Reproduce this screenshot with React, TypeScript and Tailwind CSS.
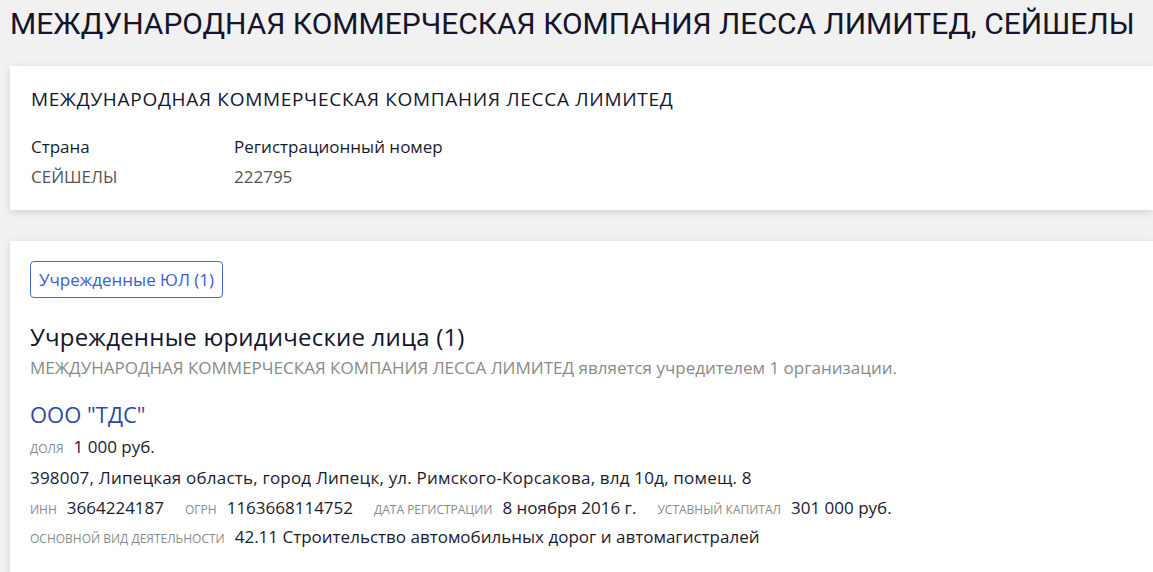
const titleFont = { fontFamily: "Roboto, 'Noto Sans', sans-serif" };
const bodyFont = { fontFamily: "'Open Sans', 'Noto Sans', sans-serif" };

function Label({ children }: { children: React.ReactNode }) {
  return (
    <span className="mr-[10px] text-[12px] uppercase leading-[16px] text-[#8a8a8a]">{children}</span>
  );
}

export default function App() {
  return (
    <div style={bodyFont} className="min-h-[572px] overflow-hidden bg-[#f1f1f1] text-[#1b1b2f]">
      <h1 style={titleFont} className="px-[10px] pt-[4px] text-[30px] leading-[40px] text-[#14152b]">
        МЕЖДУНАРОДНАЯ КОММЕРЧЕСКАЯ КОМПАНИЯ ЛЕССА ЛИМИТЕД, СЕЙШЕЛЫ
      </h1>

      <div className="ml-[10px] mt-[22px] bg-white px-[21px] pb-[18px] pt-[20px] shadow-[0_2px_8px_rgba(0,0,0,0.12)]">
        <h2 className="text-[19px] leading-[26px] tracking-[0.7px] text-[#14152b]">
          МЕЖДУНАРОДНАЯ КОММЕРЧЕСКАЯ КОМПАНИЯ ЛЕССА ЛИМИТЕД
        </h2>
        <div className="mt-[20px] flex text-[17px] leading-[30px]">
          <div className="w-[203px]">
            <div>Страна</div>
            <div className="text-[#555]">СЕЙШЕЛЫ</div>
          </div>
          <div>
            <div>Регистрационный номер</div>
            <div className="text-[#555]">222795</div>
          </div>
        </div>
      </div>

      <div className="ml-[10px] mt-[31px] bg-white px-[20px] pb-[40px] pt-[20px] shadow-[0_2px_8px_rgba(0,0,0,0.12)]">
        <button className="rounded-[4px] border border-[#4a68d4] px-[8px] py-[6px] text-[17px] leading-[23px] text-[#3c5cd0]">
          Учрежденные ЮЛ (1)
        </button>

        <h3 className="mt-[21px] text-[24px] leading-[36px] tracking-[0.2px] text-[#14152b]">
          Учрежденные юридические лица (1)
        </h3>
        <p className="mt-[1px] text-[17px] leading-[24px] text-[#8a8a8a]">
          МЕЖДУНАРОДНАЯ КОММЕРЧЕСКАЯ КОМПАНИЯ ЛЕССА ЛИМИТЕД является учредителем 1 организации.
        </p>

        <div className="mt-[16px] text-[17px] leading-[30px] text-[#1b1b2f]">
          <a className="block text-[22px] leading-[36px] text-[#2c4a9f]">ООО "ТДС"</a>
          <div className="flex items-baseline">
            <Label>доля</Label>
            <span>1 000 руб.</span>
          </div>
          <div className="leading-[31px] tracking-[0.2px]">
            398007, Липецкая область, город Липецк, ул. Римского-Корсакова, влд 10д, помещ. 8
          </div>
          <div className="flex items-baseline">
            <Label>инн</Label>
            <span className="mr-[21px]">3664224187</span>
            <Label>огрн</Label>
            <span className="mr-[21px]">1163668114752</span>
            <Label>дата регистрации</Label>
            <span className="mr-[21px]">8 ноября 2016 г.</span>
            <Label>уставный капитал</Label>
            <span>301 000 руб.</span>
          </div>
          <div className="flex items-baseline leading-[28px]">
            <Label>основной вид деятельности</Label>
            <span>42.11 Строительство автомобильных дорог и автомагистралей</span>
          </div>
        </div>
      </div>
    </div>
  );
}
